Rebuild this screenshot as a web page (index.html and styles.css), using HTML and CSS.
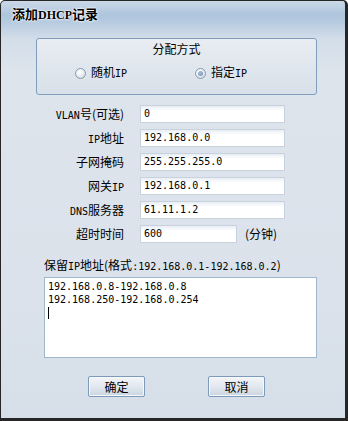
FILE: index.html
```html
<!DOCTYPE html>
<html lang="zh-CN">

<head>
    <meta charset="UTF-8">
    <title>添加DHCP记录</title>
    <link rel="stylesheet" href="styles.css">
</head>

<body>
    <div class="window">

        <!-- title bar -->
        <div class="title">添加<span class="en">DHCP</span>记录</div>

        <!-- allocation mode -->
        <div class="group">
            <div class="group-title">分配方式</div>
            <div class="radios">
                <label class="radio"><span class="dot"></span><span>随机<span class="en">IP</span></span></label>
                <label class="radio"><span class="dot checked"></span><span>指定<span class="en">IP</span></span></label>
            </div>
        </div>

        <!-- fields -->
        <div class="fields">
            <div class="lbl"><span class="en">VLAN</span>号(可选)</div>
            <div class="input">0</div>

            <div class="lbl"><span class="en">IP</span>地址</div>
            <div class="input">192.168.0.0</div>

            <div class="lbl">子网掩码</div>
            <div class="input">255.255.255.0</div>

            <div class="lbl">网关<span class="en">IP</span></div>
            <div class="input">192.168.0.1</div>

            <div class="lbl"><span class="en">DNS</span>服务器</div>
            <div class="input">61.11.1.2</div>

            <div class="lbl">超时时间</div>
            <div class="with-unit">
                <div class="input short">600</div>
                <div class="unit">(分钟)</div>
            </div>
        </div>

        <!-- reserved addresses -->
        <div class="reserve-label">保留<span class="en">IP</span>地址(格式<span class="en">:192.168.0.1-192.168.0.2</span>)</div>
        <div class="textarea">
            <div>192.168.0.8-192.168.0.8</div>
            <div>192.168.250-192.168.0.254</div>
            <div><span class="caret"></span></div>
        </div>

        <!-- buttons -->
        <div class="buttons">
            <button>确定</button>
            <button>取消</button>
        </div>
    </div>
</body>

</html>
```

FILE: styles.css
```css
body {
    margin: 0;
    font-family: "Noto Sans CJK SC", sans-serif;
    font-size: 12px;
    color: #000;
}

.en {
    font-family: "DejaVu Sans Mono", "Noto Sans CJK SC", monospace;
    font-size: 10px;
}

.window {
    box-sizing: border-box;
    width: 348px;
    height: 421px;
    border-style: solid;
    border-color: #262626;
    border-width: 1px 3px 3px 1px;
    border-radius: 5px 5px 0 0;
    background: linear-gradient(to bottom, #cbd9e8 0, #aec5dd 14px, #b8cce1 22px, #d3dee9 38px, #dde4ec 70px, #dbe2eb 300px, #d6dfe9 100%);
}

.title {
    height: 37px;
    box-sizing: border-box;
    padding: 5px 0 0 11px;
    font-size: 13px;
    font-weight: bold;
    line-height: 16px;
    text-shadow: 0 0 3px #fff, 0 0 2px #fff, 0 0 1px #fff;
}

.title .en {
    font-family: "Liberation Serif", serif;
    font-size: 12px;
    font-weight: bold;
}

.group {
    height: 57px;
    box-sizing: border-box;
    margin: 0 28px 0 35px;
    border: 1px solid #7f9ebe;
    border-radius: 3px;
    background: linear-gradient(to bottom, #e9edf2, #d8e0e9);
}

.group-title {
    height: 14px;
    padding-top: 3px;
    line-height: 14px;
    text-align: center;
}

.radios {
    display: flex;
    height: 14px;
    margin-top: 10px;
    padding-left: 38px;
    line-height: 14px;
}

.radio {
    display: flex;
    align-items: center;
    gap: 5px;
    width: 120px;
}

.dot {
    width: 11px;
    height: 11px;
    box-sizing: border-box;
    border: 1px solid #8799ae;
    border-radius: 50%;
    background: radial-gradient(circle at 40% 35%, #ffffff 0, #eef2f6 40%, #c3cedb 100%);
    position: relative;
}

.dot.checked::after {
    content: "";
    position: absolute;
    left: 2px;
    top: 2px;
    width: 5px;
    height: 5px;
    border-radius: 50%;
    background: radial-gradient(circle at 40% 35%, #a9bdd6, #6f8fb5);
}

.fields {
    display: grid;
    grid-template-columns: 123px 145px;
    grid-auto-rows: 18px;
    column-gap: 16px;
    row-gap: 6px;
    margin-top: 10px;
}

.lbl {
    text-align: right;
    line-height: 18px;
    overflow: hidden;
}

.input {
    box-sizing: border-box;
    height: 18px;
    padding: 0 3px;
    border: 1px solid #c6d2de;
    background: linear-gradient(to bottom, #e9eef4 0, #ffffff 5px, #ffffff 100%);
    font-family: "DejaVu Sans Mono", monospace;
    font-size: 10px;
    line-height: 16px;
}

.with-unit {
    display: flex;
    gap: 8px;
}

.input.short {
    width: 97px;
}

.unit {
    line-height: 18px;
    white-space: nowrap;
}

.reserve-label {
    height: 14px;
    margin: 15px 0 0 43px;
    line-height: 14px;
}

.textarea {
    box-sizing: border-box;
    width: 273px;
    height: 81px;
    margin: 5px 0 0 43px;
    padding: 2px 3px;
    border: 1px solid #9fb6cc;
    background: #fff;
    font-family: "DejaVu Sans Mono", monospace;
    font-size: 10px;
    line-height: 13px;
}

.caret {
    display: inline-block;
    width: 1px;
    height: 12px;
    margin-top: 1px;
    background: #000;
    vertical-align: top;
}

.buttons {
    display: flex;
    gap: 63px;
    margin-top: 18px;
    padding-left: 87px;
}

button {
    width: 57px;
    height: 21px;
    padding: 0;
    border: 1px solid #7d9bb9;
    border-radius: 2px;
    background: linear-gradient(to bottom, #f3f5f8 0, #e2e8ef 50%, #cbd5e0 100%);
    box-shadow: inset 0 0 0 1px #f6f8fb;
    font-family: "Noto Sans CJK SC", sans-serif;
    font-size: 12px;
    color: #000;
}
```
